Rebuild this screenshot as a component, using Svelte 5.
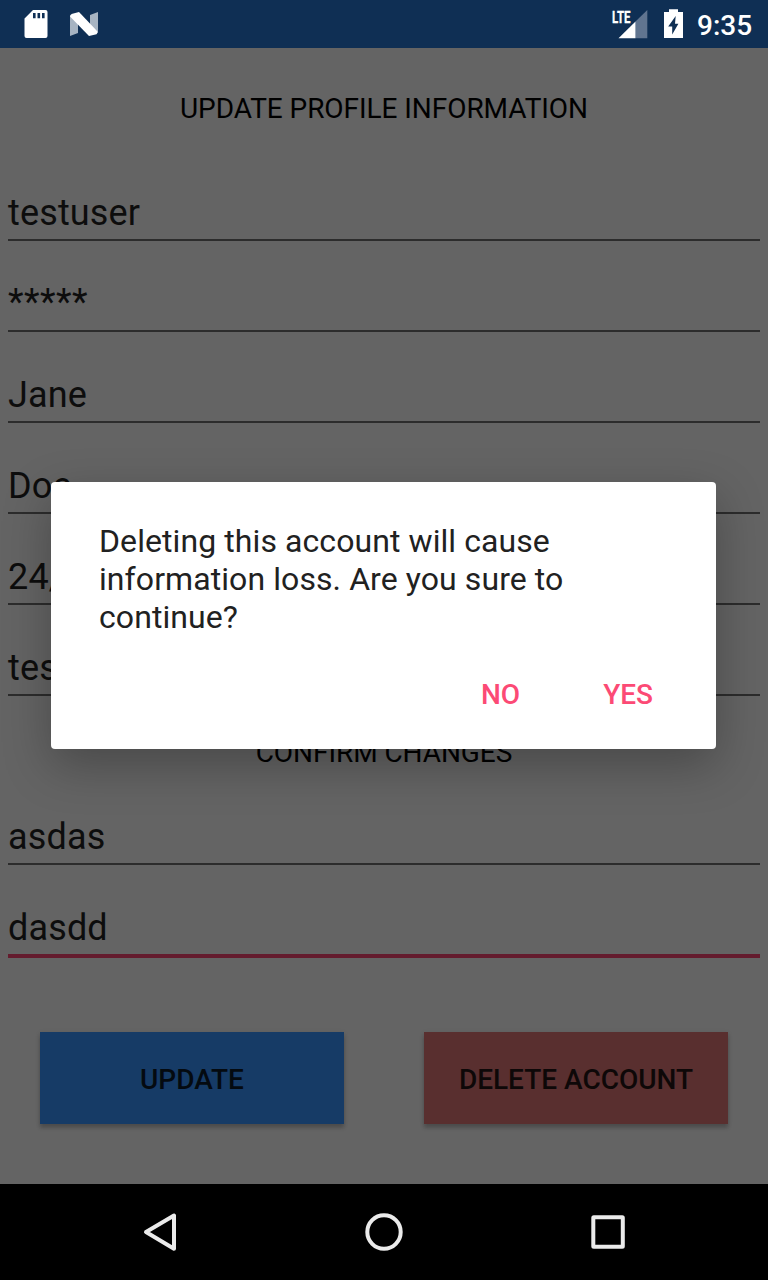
<script>
  const profile = ['testuser', '*****', 'Jane', 'Doe', '24/', 'test'];
  const confirmation = ['asdas', 'dasdd'];
  const focused = 'dasdd';
</script>

<div class="screen">
  <header class="status">
    <svg class="left" width="120" height="48" viewBox="0 0 120 48">
      <path fill="#fff" fill-rule="evenodd" d="M33 10H45.5Q47.5 10 47.5 12V36Q47.5 38 45.5 38H26.5Q24.500 38 24.500 36V18.500ZM33 13V18.300H35.600V13ZM37.500 13V18.300H40.100V13ZM42 13V18.300H44.600V13Z" />
      <path fill="#a7b4c2" d="M70 14.500L78 21V33L70 36ZM90 15L98 12V32L90 26Z" />
      <path fill="#fff" d="M70 16.500L71.500 14L79 12L98 32L96.500 34.200L89 36Z" />
    </svg>
    <svg class="right" width="86" height="48" viewBox="606 0 86 48">
      <path fill="#617590" d="M635.500 21.500L647.300 10V38.300H635.500Z" />
      <path fill="#fff" d="M618.500 38.300L635.500 21.500V38.300Z" />
      <text class="lte" x="612" y="22.700" textLength="18.500" lengthAdjust="spacingAndGlyphs">LTE</text>
      <path fill="#fff" fill-rule="evenodd" d="M669 9.300H678V12H683V38H664V12H669ZM675.700 16L668.200 26.500H672.200V34.500L678.400 23.700H675Z" />
    </svg>
    <span class="clock">9:35</span>
  </header>

  <main>
    <h1>UPDATE PROFILE INFORMATION</h1>
    <section class="fields">
      {#each profile as value}
        <div class="field" class:masked={value === '*****'}><span>{value}</span></div>
      {/each}
    </section>
    <h2>CONFIRM CHANGES</h2>
    <section class="fields">
      {#each confirmation as value}
        <div class="field" class:focused={value === focused}><span>{value}</span></div>
      {/each}
    </section>
    <div class="actions">
      <button class="update">UPDATE</button>
      <button class="delete">DELETE ACCOUNT</button>
    </div>
  </main>

  <nav>
    <svg width="768" height="96" viewBox="0 0 768 96" fill="none" stroke="#ebebeb" stroke-width="4" stroke-linejoin="round">
      <path d="M146 48L174 31.500V64.700Z" />
      <circle cx="384" cy="48" r="16.700" />
      <rect x="593.300" y="33.300" width="29.500" height="29.500" rx=".5" />
    </svg>
  </nav>

  <div class="dialog" role="dialog">
    <p>Deleting this account will cause information loss. Are you sure to continue?</p>
    <div class="choices">
      <button>NO</button>
      <button>YES</button>
    </div>
  </div>
</div>

<style>
  :global(body) { background: #646464; }
  .screen {
    position: relative;
    display: flex;
    flex-direction: column;
    width: 768px;
    height: 1280px;
    overflow: hidden;
    background: #646464;
    font-family: Roboto, sans-serif;
  }
  .status {
    display: flex;
    height: 48px;
    background: #0f2f54;
    color: #fff;
  }
  .right { margin-left: auto; }
  .lte { fill: #fff; stroke: #fff; stroke-width: .3px; font-size: 17px; font-weight: 700; }
  .clock {
    width: 71px;
    padding-left: 5px;
    font-size: 28px;
    font-weight: 500;
    line-height: 52px;
  }
  main { flex: 1; padding: 0 8px; }
  h1, h2 {
    margin: 0;
    color: #000;
    font-size: 28px;
    font-weight: 400;
    letter-spacing: -.06px;
    text-align: center;
    white-space: nowrap;
  }
  h1 { height: 102px; line-height: 122px; }
  h2 { height: 78px; line-height: 114px; }
  .field {
    display: flex;
    align-items: flex-end;
    box-sizing: border-box;
    height: 91px;
    padding-bottom: 5px;
    border-bottom: 2px solid #2c2c2c;
    color: #0d0d0d;
    font-size: 36px;
    letter-spacing: .15px;
    line-height: 42px;
  }
  .masked { padding-bottom: 7px; letter-spacing: .5px; }
  .focused {
    height: 93px;
    border-bottom: 4px solid #641c2e;
  }
  .actions {
    display: grid;
    grid-template-columns: 304px 304px;
    gap: 80px;
    padding: 74px 32px 0;
  }
  button {
    padding: 0;
    border: 0;
    font: 500 28px/33px Roboto, sans-serif;
  }
  .actions button {
    height: 92px;
    padding-top: 2px;
    box-shadow: 0 4px 4px rgba(0, 0, 0, .2), 0 1px 5px rgba(0, 0, 0, .1);
  }
  .update { background: #163b66; color: #040a10; }
  .delete { background: #592f2f; color: #0e0808; }
  nav { height: 96px; background: #000; }
  nav svg { display: block; }
  .dialog {
    position: absolute;
    left: 51px;
    top: 482px;
    box-sizing: border-box;
    width: 665px;
    height: 267px;
    padding: 40px 48px 0;
    border-radius: 4px;
    background: #fff;
    box-shadow: 0 16px 48px rgba(0, 0, 0, .28);
  }
  p {
    margin: 0;
    color: #212121;
    font-size: 32px;
    letter-spacing: .08px;
    line-height: 38px;
  }
  .choices {
    display: flex;
    justify-content: flex-end;
    gap: 83px;
    padding: 42px 15px 0 0;
  }
  .choices button { background: none; color: #fc4a75; }
</style>
